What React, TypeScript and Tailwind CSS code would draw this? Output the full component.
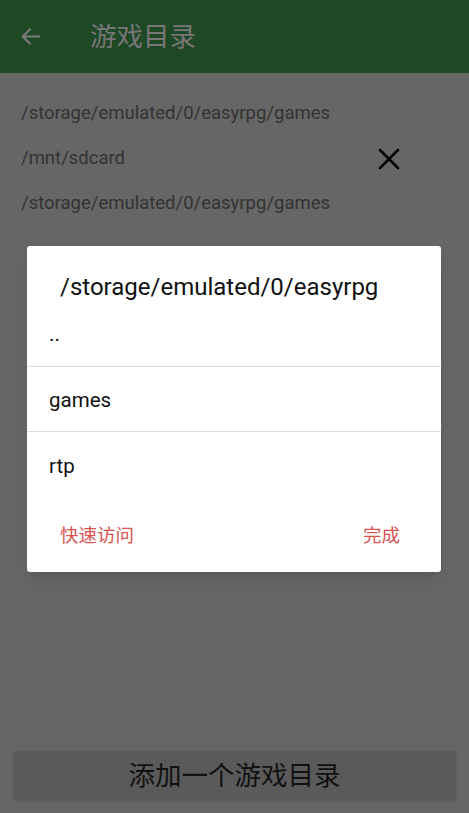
import { X } from 'lucide-react';

const folders = [
    '/storage/emulated/0/easyrpg/games',
    '/mnt/sdcard',
    '/storage/emulated/0/easyrpg/games',
];

export default function App() {
    return (
        <div
            className="relative w-[469px] h-[813px] bg-[#666666] flex flex-col overflow-hidden"
            style={{ fontFamily: 'Roboto, "Noto Sans CJK SC", sans-serif' }}
        >
            {/* Toolbar (dimmed by the dialog scrim) */}
            <div className="h-[73px] bg-[#1f4825] flex items-center shrink-0">
                <svg className="ml-[20px] w-[23px] h-[23px]" viewBox="0 0 24 24" fill="none" stroke="#7a7a7a" strokeWidth="2.2">
                    <path d="M21 12H3M11 4l-8 8 8 8" />
                </svg>
                <span className="ml-[47px] text-[26.5px] text-[#777777]">游戏目录</span>
            </div>

            {/* Folder list */}
            <div className="flex flex-col pt-[18px]">
                {folders.map((f, i) => (
                    <div key={i} className="h-[45px] flex items-center pl-[21px] pr-[62px] justify-between">
                        <span className="text-[18.5px] text-[#333333]">{f}</span>
                        {i === 1 && <X className="w-[36px] h-[36px] text-black" strokeWidth={1.7} />}
                    </div>
                ))}
            </div>

            <div className="flex-1" />

            {/* Add directory button */}
            <div className="px-[13px] pb-[13px]">
                <div className="h-[49px] bg-[#5a5a5a] rounded-[2px] shadow-sm flex items-center justify-center text-[26.5px] text-[#111111]">
                    添加一个游戏目录
                </div>
            </div>

            {/* Folder picker dialog */}
            <div className="absolute left-[27px] top-[246px] w-[414px] h-[326px] bg-white rounded-[3px] shadow-lg flex flex-col">
                <div className="pl-[33px] pt-[26px] h-[79px] text-[24px] leading-[30px] text-[#111111]">/storage/emulated/0/easyrpg</div>
                <div className="flex flex-col">
                    <div className="h-[42px] pl-[22px] border-b border-[#dddddd]">
                        <span className="block -mt-[2px] text-[20.5px] leading-[22px] text-[#111111]">..</span>
                    </div>
                    <div className="h-[65px] flex items-center pl-[22px] pt-[3px] text-[20.5px] text-[#111111] border-b border-[#dddddd]">games</div>
                    <div className="h-[65px] flex items-center pl-[22px] pt-[3px] text-[20.5px] text-[#111111]">rtp</div>
                </div>
                <div className="flex justify-between pl-[33px] pr-[41px] pt-[26px] text-[18.5px] leading-[26px] text-[#d9534f]">
                    <span>快速访问</span>
                    <span>完成</span>
                </div>
            </div>
        </div>
    );
}
